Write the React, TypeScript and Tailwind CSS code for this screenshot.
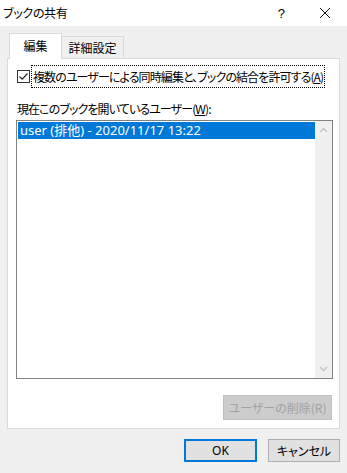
import React from "react";

const jp = "font-['Noto_Sans_CJK_JP',sans-serif] [font-feature-settings:'palt']";

function Chevron({ up }: { up?: boolean }) {
  return (
    <svg width="9" height="6" viewBox="0 0 9 6">
      <path
        d={up ? "M1 5 L4.5 1.5 L8 5" : "M1 1 L4.5 4.5 L8 1"}
        fill="none"
        stroke="#c3c3c3"
        strokeWidth="1.4"
      />
    </svg>
  );
}

export default function App() {
  return (
    <div className={`w-[347px] h-[473px] bg-[#f0f0f0] flex flex-col text-[12px] leading-none text-black ${jp}`}>
      {/* Title bar */}
      <div className="h-[26px] bg-white flex items-center pl-[3px] shrink-0">
        <span className="text-[12px] tracking-[-0.3px]">ブックの共有</span>
        <span className="ml-auto mr-[34px] text-[13px] font-['Liberation_Sans',sans-serif]">?</span>
        <svg width="12" height="12" viewBox="0 0 12 12" className="mr-[16px]">
          <path d="M1 1 L11 11 M11 1 L1 11" stroke="#111" strokeWidth="1" />
        </svg>
      </div>

      {/* Tabs */}
      <div className="flex items-end pl-[9px] mt-[7px] h-[25px] shrink-0 relative z-10">
        <div className="w-[53px] bg-white border-x border-t border-[#d9d9d9] flex items-center justify-center pb-[1px] -mb-px h-[26px]">
          編集
        </div>
        <div className="w-[62px] h-[22px] bg-[#f0f0f0] border-r border-t border-[#d9d9d9] flex items-center justify-center">
          詳細設定
        </div>
      </div>

      {/* Panel */}
      <div className="mx-[7px] h-[371px] bg-white border border-[#d9d9d9] flex flex-col pl-[8px] pr-[6px] shrink-0">
        <div className="flex items-center mt-[6px]">
          <div className="ml-[1px] w-[13px] h-[13px] border border-[#333] flex items-center justify-center bg-white shrink-0">
            <svg width="11" height="11" viewBox="0 0 11 11">
              <path d="M1.5 5.5 L4.2 8.2 L9.5 2.5" fill="none" stroke="#222" strokeWidth="1.2" />
            </svg>
          </div>
          <div className="ml-[1px] h-[23px] px-[1px] border border-dotted border-black flex items-center whitespace-nowrap">
            <span className="tracking-[-0.9px]">
              複数のユーザーによる同時編集と、ブックの結合を許可する(<span className="underline">A</span>)
            </span>
          </div>
        </div>

        <div className="mt-[15px] ml-[1px] tracking-[-0.9px] whitespace-nowrap">
          現在このブックを開いているユーザー(<span className="underline">W</span>):
        </div>

        <div className="mt-[5px] w-[317px] h-[259px] border border-[#828282] flex">
          <div className="flex-1 pt-[1px] pl-[1px]">
            <div className="h-[17px] bg-[#0078d7] text-white flex items-center pl-[2px] text-[13px] font-['Noto_Sans','Noto_Sans_CJK_JP',sans-serif] [font-feature-settings:normal] whitespace-nowrap">
              user (排他) - 2020/11/17 13:22
            </div>
          </div>
          <div className="w-[17px] bg-[#f0f0f0] flex flex-col items-center justify-between py-[6px]">
            <Chevron up />
            <Chevron />
          </div>
        </div>

        <div className="flex justify-end mt-[16px] w-[317px]">
          <div className="w-[109px] h-[25px] bg-[#cccccc] border border-[#bfbfbf] text-[#a2a2a2] flex items-center justify-center mr-px whitespace-nowrap">
            ユーザーの削除(R)
          </div>
        </div>
      </div>

      {/* Footer */}
      <div className="flex justify-end gap-[11px] pr-[7px] mt-[10px]">
        <div className="w-[73px] h-[23px] bg-[#e1e1e1] border-2 border-[#0078d7] flex items-center justify-center font-['Noto_Sans',sans-serif] text-[12px]">
          OK
        </div>
        <div className="w-[72px] h-[23px] bg-[#e1e1e1] border border-[#adadad] flex items-center justify-center whitespace-nowrap">
          キャンセル
        </div>
      </div>
    </div>
  );
}
